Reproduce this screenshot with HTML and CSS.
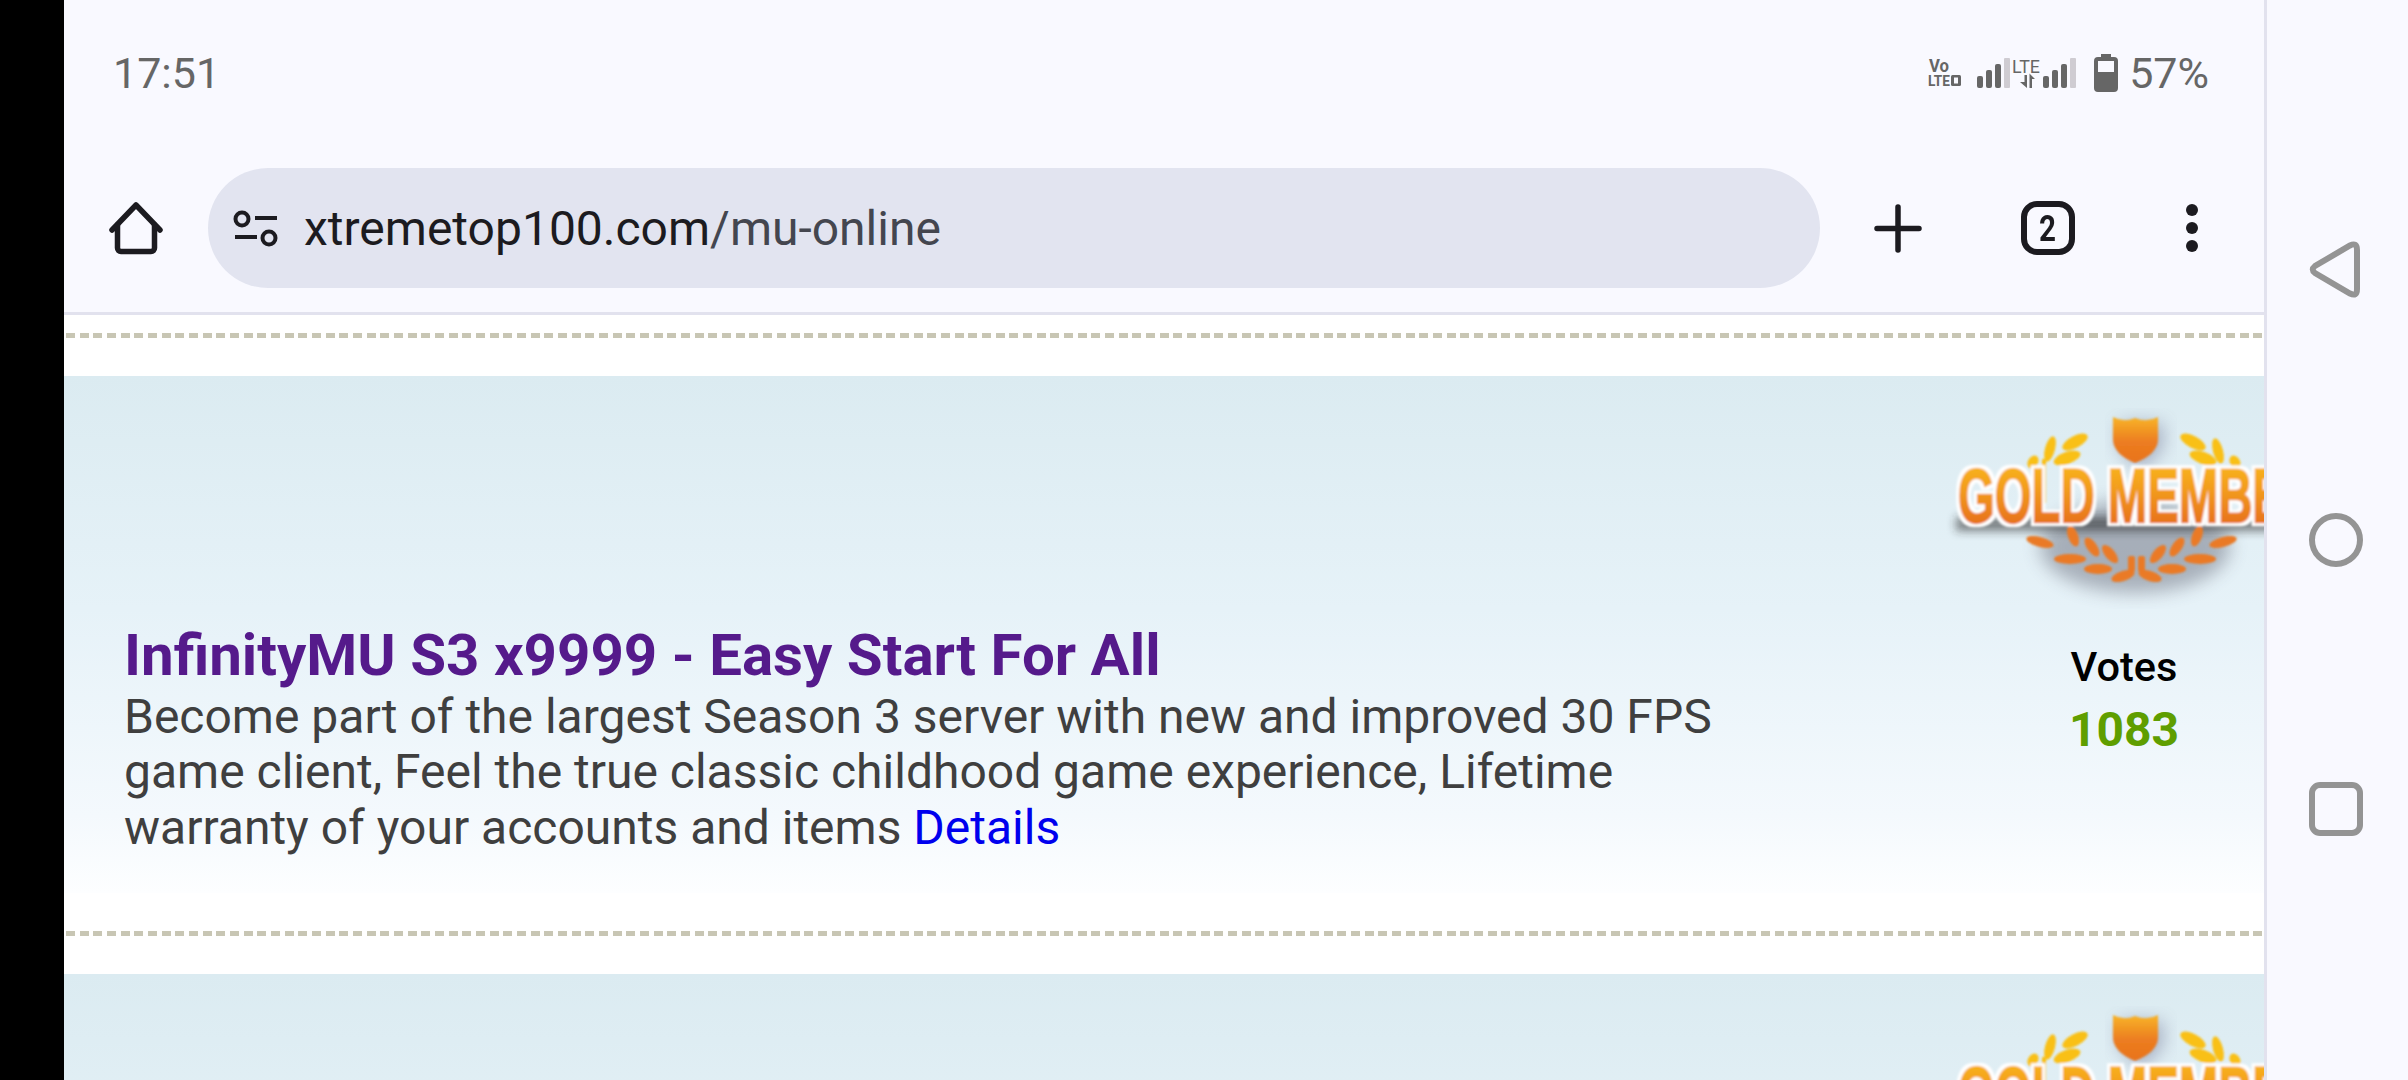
FILE: index.html
```html
<!DOCTYPE html>
<html lang="en">
<head>
<meta charset="utf-8">
<title>xtremetop100.com/mu-online</title>
<link rel="stylesheet" href="styles.css">
</head>
<body>
<div class="screen">
  <div class="cutout"></div>
  <main class="browser">
    <div class="status">
      <span class="time">17:51</span>
      <div class="status-right">
        <svg class="ic-volte" width="34" height="30" viewBox="0 0 34 30">
          <text x="1" y="14" class="vo" textLength="20" lengthAdjust="spacingAndGlyphs">Vo</text>
          <text x="0" y="28" class="lte2" textLength="22" lengthAdjust="spacingAndGlyphs">LTE</text>
          <rect x="23" y="17" width="10" height="11" rx="1.500" fill="#666"/>
          <rect x="26" y="19.500" width="4" height="6" fill="#f9f9ff"/>
        </svg>
        <svg class="ic-net" width="100" height="32" viewBox="0 0 100 32">
          <g fill="#666">
            <rect x="0" y="19" width="6" height="12" rx="2"/>
            <rect x="9" y="13" width="6" height="18" rx="2"/>
            <rect x="18" y="7" width="6" height="24" rx="2"/>
            <rect x="66" y="19" width="6" height="12" rx="2"/>
            <rect x="75" y="13" width="6" height="18" rx="2"/>
            <rect x="84" y="7" width="6" height="24" rx="2"/>
            <path d="M47.500 18H50V31L43 25H47.500ZM52.500 31H55V22H58L52.500 16.500Z"/>
          </g>
          <rect x="27" y="1" width="6" height="30" rx="1" fill="#cfccd2"/>
          <rect x="93" y="1" width="6" height="30" rx="1" fill="#cfccd2"/>
          <text x="35" y="16" class="lte" textLength="28" lengthAdjust="spacingAndGlyphs">LTE</text>
        </svg>
        <svg class="ic-batt" width="24" height="38" viewBox="0 0 24 38">
          <path d="M7 0h10v3h3a4 4 0 0 1 4 4v27a4 4 0 0 1-4 4H4a4 4 0 0 1-4-4V7a4 4 0 0 1 4-4h3z" fill="#666"/>
          <rect x="4" y="7" width="16" height="11" fill="#f9f9ff"/>
        </svg>
        <span class="pct">57%</span>
      </div>
    </div>

    <header class="toolbar">
      <svg class="ic-home" width="54" height="54" viewBox="0 0 54 54" fill="none" stroke="#1c1b20" stroke-width="5.500" stroke-linecap="round" stroke-linejoin="round">
        <path d="M3 29 27 4 51 29"/>
        <path d="M8.500 24V47a3.500 3.500 0 0 0 3.500 3.500H42a3.500 3.500 0 0 0 3.500-3.500V24"/>
      </svg>
      <div class="omnibox">
        <svg class="ic-tune" width="46" height="38" viewBox="0 0 46 38" fill="none" stroke="#1c1b20" stroke-width="4">
          <circle cx="9" cy="10" r="6.500"/>
          <path d="M22 9H44M2 28H24"/>
          <circle cx="36" cy="29" r="6.500"/>
        </svg>
        <span class="url"><span class="host">xtremetop100.com</span><span class="path">/mu-online</span></span>
      </div>
      <svg class="ic-plus" width="48" height="49" viewBox="0 0 48 49" fill="none" stroke="#1c1b20" stroke-width="5.500" stroke-linecap="round">
        <path d="M24 3V46M3 24.500H45"/>
      </svg>
      <div class="tabs"><span>2</span></div>
      <svg class="ic-more" width="12" height="48" viewBox="0 0 12 48" fill="#1c1b20">
        <circle cx="6" cy="6" r="6"/><circle cx="6" cy="24" r="6"/><circle cx="6" cy="42" r="6"/>
      </svg>
    </header>

    <section class="list">
      <div class="sep sep-first"></div>
      <article class="card">
        <div class="info">
          <a class="title" href="#">InfinityMU S3 x9999 - Easy Start For All</a>
          <p class="desc">Become part of the largest Season 3 server with new and improved 30 FPS game client, Feel the true classic childhood game experience, Lifetime warranty of your accounts and items <a class="details" href="#">Details</a></p>
        </div>
        <div class="side">
          <svg class="badge" width="380" height="210" viewBox="0 0 380 210">
            <defs>
              <linearGradient id="gt" x1="0" y1="0" x2="0" y2="1"><stop offset="0" stop-color="#fbbf16"/><stop offset=".45" stop-color="#f29a1e"/><stop offset="1" stop-color="#e2601a"/></linearGradient>
              <linearGradient id="gs" x1="0" y1="0" x2="0" y2="1"><stop offset="0" stop-color="#f8b428"/><stop offset=".55" stop-color="#ec7c20"/><stop offset="1" stop-color="#e8741e"/></linearGradient>
              <filter id="soft" x="-20%" y="-20%" width="140%" height="150%"><feGaussianBlur stdDeviation="1"/></filter>
              <filter id="sh" x="-30%" y="-30%" width="160%" height="170%"><feGaussianBlur stdDeviation="9"/></filter>
              <filter id="sh2" x="-30%" y="-80%" width="160%" height="260%"><feGaussianBlur stdDeviation="5"/></filter>
              <filter id="halo" x="-5%" y="-20%" width="110%" height="140%">
                <feMorphology in="SourceAlpha" operator="dilate" radius="3" result="d"/>
                <feFlood flood-color="#fff"/>
                <feComposite in2="d" operator="in" result="w"/>
                <feMerge><feMergeNode in="w"/><feMergeNode in="SourceGraphic"/></feMerge>
              </filter>
            </defs>
            <g id="badge-art">
              <ellipse cx="195" cy="148" rx="95" ry="46" fill="#3c3c50" opacity=".36" filter="url(#sh)"/>
              <path d="M179 24h44v26l-22 22-22-22z" fill="#55557a" opacity=".4" filter="url(#sh)"/>
              <rect x="16" y="118" width="364" height="14" fill="#222" opacity=".55" filter="url(#sh2)"/>
              <g filter="url(#soft)">
                <path d="M173 18q11 6 22 1q12 5 23-1V40q0 15-23 24q-22-9-22-24z" fill="url(#gs)"/>
                <g fill="#f9c015">
                  <ellipse cx="0" cy="0" rx="14" ry="6" transform="translate(135 43) rotate(-28)"/>
                  <ellipse cx="0" cy="0" rx="14" ry="6" transform="translate(127 59) rotate(-20)"/>
                  <ellipse cx="0" cy="0" rx="13" ry="5" transform="translate(110 50) rotate(-75)"/>
                  <ellipse cx="0" cy="0" rx="7" ry="5" transform="translate(93 63) rotate(-60)"/>
                  <rect x="102" y="60" width="4" height="44" fill="#f9c015"/>
                  <ellipse cx="0" cy="0" rx="14" ry="6" transform="translate(253 43) rotate(28)"/>
                  <ellipse cx="0" cy="0" rx="14" ry="6" transform="translate(263 59) rotate(20)"/>
                  <ellipse cx="0" cy="0" rx="13" ry="5" transform="translate(278 52) rotate(75)"/>
                  <ellipse cx="0" cy="0" rx="7" ry="5" transform="translate(295 63) rotate(60)"/>
                </g>
                <g fill="#ea7a25">
                  <ellipse cx="0" cy="0" rx="14" ry="5" transform="translate(100 143) rotate(15)"/>
                  <ellipse cx="0" cy="0" rx="11" ry="5" transform="translate(133 137) rotate(70)"/>
                  <ellipse cx="0" cy="0" rx="16" ry="5" transform="translate(130 160)"/>
                  <ellipse cx="0" cy="0" rx="11" ry="5" transform="translate(152 148) rotate(55)"/>
                  <ellipse cx="0" cy="0" rx="14" ry="5" transform="translate(158 170)"/>
                  <ellipse cx="0" cy="0" rx="11" ry="5" transform="translate(170 155) rotate(50)"/>
                  <ellipse cx="0" cy="0" rx="12" ry="5" transform="translate(183 177) rotate(-18)"/>
                  <ellipse cx="0" cy="0" rx="14" ry="5" transform="translate(283 143) rotate(-15)"/>
                  <ellipse cx="0" cy="0" rx="11" ry="5" transform="translate(257 137) rotate(-70)"/>
                  <ellipse cx="0" cy="0" rx="16" ry="5" transform="translate(260 160)"/>
                  <ellipse cx="0" cy="0" rx="11" ry="5" transform="translate(237 148) rotate(-55)"/>
                  <ellipse cx="0" cy="0" rx="14" ry="5" transform="translate(232 170)"/>
                  <ellipse cx="0" cy="0" rx="11" ry="5" transform="translate(218 155) rotate(-50)"/>
                  <ellipse cx="0" cy="0" rx="12" ry="5" transform="translate(210 177) rotate(18)"/>
                  <rect x="188" y="157" width="7" height="16" rx="2"/>
                  <rect x="198" y="157" width="7" height="16" rx="2"/>
                </g>
                <g filter="url(#halo)">
                  <text class="gold" x="18" y="123" textLength="360" lengthAdjust="spacingAndGlyphs">GOLD MEMBER</text>
                </g>
              </g>
            </g>
          </svg>
          <div class="votes">
            <span class="votes-label">Votes</span>
            <span class="votes-num">1083</span>
          </div>
        </div>
      </article>
      <div class="sep"></div>
      <article class="card">
        <div class="side">
          <svg class="badge" width="380" height="210" viewBox="0 0 380 210">
            <use href="#badge-art"/>
          </svg>
        </div>
      </article>
    </section>
  </main>
  <nav class="navrail">
    <svg width="51" height="57" viewBox="0 0 51 57" fill="none" stroke="#949494" stroke-width="6">
      <path d="M41 4.500Q48 1 48 9V48Q48 56 41 52.500L6 32Q1.500 28.500 6 25Z"/>
    </svg>
    <svg width="54" height="54" viewBox="0 0 54 54" fill="none" stroke="#949494" stroke-width="6">
      <circle cx="27" cy="27" r="24"/>
    </svg>
    <svg width="54" height="54" viewBox="0 0 54 54" fill="none" stroke="#949494" stroke-width="6">
      <rect x="3" y="3" width="48" height="48" rx="8"/>
    </svg>
  </nav>
</div>
</body>
</html>
```
FILE: styles.css
```css
* { box-sizing: border-box; }
html, body { margin: 0; padding: 0; background: #000; }
body { font-family: Roboto, "Liberation Sans", sans-serif; }
svg { display: block; flex: none; }

.screen { display: flex; width: 2408px; height: 1080px; overflow: hidden; }
.cutout { width: 64px; flex: none; background: #000; }
.browser { width: 2200px; flex: none; height: 1080px; overflow: hidden; background: #f9f9ff; }

.status { display: flex; justify-content: space-between; align-items: center; height: 144px; padding: 2px 55px 0 49px; color: #666; font-size: 43px; }
.status-right { display: flex; align-items: center; }
.ic-volte { margin-right: 15px; overflow: visible; }
.ic-net { margin-right: 17px; overflow: visible; }
.ic-batt { margin-right: 11px; }
.vo { font: 700 18px Roboto, sans-serif; fill: #666; }
.lte2 { font: 700 15px Roboto, sans-serif; fill: #666; }
.lte { font: 400 18px Roboto, sans-serif; fill: #666; }

.toolbar { display: flex; align-items: center; height: 171px; padding-left: 45px; border-bottom: 3px solid #e2e2ee; }
.ic-home { margin-right: 45px; }
.omnibox { display: flex; align-items: center; width: 1612px; height: 120px; padding-left: 25px; border-radius: 60px; background: #e2e4f0; }
.ic-tune { margin-right: 25px; }
.url { font-size: 48px; }
.host { color: #1c1b20; }
.path { color: #44464f; }
.ic-plus { margin-left: 54px; margin-right: 99px; }
.tabs { display: flex; align-items: center; justify-content: center; width: 54px; height: 54px; margin-right: 111px; border: 6px solid #1c1b20; border-radius: 16px; color: #1c1b20; font-size: 37px; font-weight: 700; line-height: 1; }
.tabs span { transform: scaleX(.8); }

.list { background: #fff; }
.sep { height: 81px; padding-top: 38px; }
.sep-first { height: 61px; padding-top: 18px; }
.sep::before { content: ""; display: block; height: 5px; background: repeating-linear-gradient(90deg, #c8c6b4 0 9px, transparent 9px 13.67px) 2px 0; }

.card { display: flex; align-items: flex-end; height: 517px; padding: 0 0 38px 60px; background: linear-gradient(#dbebf1 0%, #e6f2f8 45%, #f4f9fd 85%, #fdfeff 100%); }
.info { width: 1640px; }
.title { display: block; color: #551a8b; font-size: 58.250px; font-weight: 700; line-height: 68px; text-decoration: none; }
.desc { margin: 0; color: #3f3f3f; font-size: 48px; line-height: 55.500px; }
.details { color: #0000ee; text-decoration: none; }

.side { align-self: flex-start; width: 368px; flex: none; margin-left: auto; margin-right: -44px; padding-top: 23px; }
.badge { display: block; margin-bottom: 25px; }
.gold { font: 700 76px "Liberation Sans", sans-serif; fill: url(#gt); stroke: url(#gt); stroke-width: 2.500px; }
.votes { display: flex; flex-direction: column; align-items: center; font-weight: 500; }
.votes-label { color: #000; font-size: 41.500px; line-height: 66px; }
.votes-num { color: #5f9e00; font-size: 48px; font-weight: 700; line-height: 60px; }

.navrail { flex: none; width: 144px; height: 1080px; display: flex; flex-direction: column; gap: 215px; padding: 241px 0 0 42px; border-left: 3px solid #e2e2ee; background: #f9f9ff; }
```
